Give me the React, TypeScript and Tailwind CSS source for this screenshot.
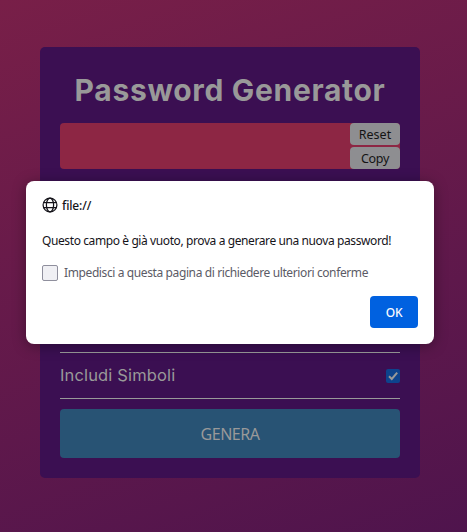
import React from "react";

function Globe() {
  return (
    <svg width="16" height="16" viewBox="0 0 16 16" fill="none" stroke="#15141a" strokeWidth="1.25" aria-hidden="true">
      <circle cx="8" cy="8" r="6.9" />
      <ellipse cx="8" cy="8" rx="3.6" ry="6.9" />
      <path d="M1.5 5.5h13M1.5 10.5h13" />
    </svg>
  );
}

function Dialog() {
  return (
    <div
      role="dialog"
      className="absolute left-[26px] top-[181px] flex h-[163px] w-[408px] flex-col rounded-lg bg-white px-4 pt-4 pb-4 font-['Noto_Sans','Open_Sans',sans-serif] text-[12px] leading-4 text-[#15141a] shadow-[0_2px_14px_rgba(0,0,0,0.35)]"
    >
      <div className="flex h-4 items-center gap-1 font-medium">
        <Globe />
        <span className="whitespace-nowrap pt-0.5 tracking-[-0.15px]">file://</span>
      </div>
      <p className="mt-5 whitespace-nowrap tracking-[-0.4px]">
        Questo campo è già vuoto, prova a generare una nuova password!
      </p>
      <div className="mt-4 flex h-4 items-center gap-1.5 text-[#5b5b66]">
        <span className="size-4 shrink-0 rounded-[2px] border border-[#8f8f9d] bg-[#f0f0f4]" />
        <span className="whitespace-nowrap tracking-[-0.39px]">Impedisci a questa pagina di richiedere ulteriori conferme</span>
      </div>
      <div className="mt-auto flex justify-end">
        <button className="h-8 w-12 rounded-[4px] bg-[#0061e0] pt-px font-medium tracking-[-0.3px] text-[#fbfbfe]">OK</button>
      </div>
    </div>
  );
}

export default function App() {
  return (
    <main className="relative h-[532px] w-[467px] overflow-hidden bg-[linear-gradient(160deg,#781f48,#4f144d)] pl-10 pr-[47px] pt-[47px]">
      <section className="flex h-[431px] flex-col rounded-[5px] bg-[#3b0f52] px-5 pt-[22px] pb-5 text-[#999]">
        <h1 className="flex h-[43px] items-center justify-center whitespace-nowrap font-['Inter',sans-serif] text-[30px] font-bold leading-[43px] tracking-[0.68px]">
          Password Generator
        </h1>
        <div className="mt-[11px] flex h-[46px] shrink-0 justify-end rounded-[4px] bg-[#8d2644]">
          <div className="flex w-[50px] flex-col gap-0.5 font-['Noto_Sans',sans-serif] text-[12.5px] text-[#141414]">
            <button className="h-[22px] rounded-[4px] bg-[#8e8e91] pt-px leading-[21px]">Reset</button>
            <button className="h-[22px] rounded-[4px] bg-[#8e8e91] pt-px leading-[21px] tracking-[-0.3px]">Copy</button>
          </div>
        </div>
        <div className="mt-auto flex h-[47px] shrink-0 items-center justify-between border-y border-[#999]">
          <span className="whitespace-nowrap pb-0.5 font-['Inter',sans-serif] text-[16.5px] leading-6 tracking-[0.15px]">Includi Simboli</span>
          <span className="mt-px flex size-[14px] items-center justify-center rounded-[2px] bg-[#0d438d]">
            <svg width="14" height="14" viewBox="0 0 14 14" fill="none" stroke="#999" strokeWidth="2" aria-hidden="true">
              <path d="M3 7.2 5.8 10 11.2 3.7" />
            </svg>
          </span>
        </div>
        <button className="mt-[10px] h-[49px] shrink-0 rounded-[4px] bg-[#285374] font-['Noto_Sans',sans-serif] text-[16px] leading-6 tracking-[-0.5px]">
          GENERA
        </button>
      </section>
      <Dialog />
    </main>
  );
}
